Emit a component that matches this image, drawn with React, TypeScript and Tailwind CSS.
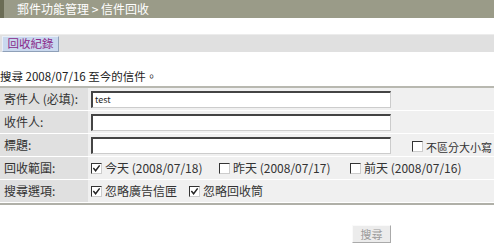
import React from 'react';

const font = { fontFamily: '"Noto Sans CJK TC", "DejaVu Sans", sans-serif' };

const Box: React.FC<{ checked?: boolean }> = ({ checked }) => (
  <span className="inline-flex items-center justify-center w-[11px] h-[11px] bg-white border-t-[1.5px] border-l-[1.5px] border-b border-r border-t-[#333] border-l-[#333] border-b-[#ccc] border-r-[#ccc] mr-[3px] shrink-0">
    {checked && (
      <svg viewBox="0 0 10 10" className="w-[9px] h-[9px]">
        <path d="M1.5 4.5 L4 7.5 L8.5 1.5" fill="none" stroke="#222" strokeWidth="1.6" />
      </svg>
    )}
  </span>
);

const Input: React.FC<{ value?: string }> = ({ value }) => (
  <div className="w-[300px] h-[17px] bg-white border-t-2 border-l-2 border-b border-r border-t-[#444] border-l-[#444] border-b-[#ccc] border-r-[#ccc] text-[9px] leading-[14px] pl-[2px] text-[#222]">
    {value}
  </div>
);

const Row: React.FC<{ label: string; children: React.ReactNode; className?: string }> = ({ label, children, className }) => (
  <div className="flex h-[23px] border-b border-white">
    <div className="w-[88px] bg-[#e0e0e0] pl-[4px] flex items-center text-[12px] text-[#333]">{label}</div>
    <div className={`flex-1 bg-[#f0f0f0] flex pl-[3px] text-[12px] text-[#333] ${className ?? 'items-center'}`}>{children}</div>
  </div>
);

export default function App() {
  return (
    <div className="w-[496px] h-[250px] bg-white overflow-hidden" style={font}>
      {/* header */}
      <div className="flex h-[18px] w-[494px] bg-[#9a9b88]">
        <div className="w-[4px] bg-[#6b6c55]" />
        <div className="pl-[13px] text-[12px] leading-[18px] text-white">郵件功能管理 &gt; 信件回收</div>
      </div>

      {/* tab bar */}
      <div className="mt-[16px] h-[18px] w-[494px] bg-[#e0e0e0] border-t border-[#ececec] flex items-center">
        <div className="ml-[2px] h-[16px] w-[57px] bg-[#c9d8ee] border border-t-[#e8eef8] border-l-[#e8eef8] border-b-[#8fa0b8] border-r-[#8fa0b8] flex items-center justify-center text-[11.5px] text-[#8a2a8a]">
          回收紀錄
        </div>
      </div>

      <div className="mt-[16px] h-[16px] text-[11.5px] leading-[16px] text-[#222]">搜尋 2008/07/16 至今的信件。</div>

      {/* form */}
      <div className="mt-[2px] w-[494px] border-t-2 border-[#b8b8b0] border-b-2 border-b-[#b0b0a8]">
        <Row label="寄件人 (必填):">
          <Input value="test" />
        </Row>
        <Row label="收件人:">
          <Input />
        </Row>
        <Row label="標題:">
          <Input />
          <div className="ml-[21px] flex items-center self-end mb-[1px] text-[11px]">
            <Box />
            不區分大小寫
          </div>
        </Row>
        <Row label="回收範圍:">
          <div className="flex items-center w-[128px]">
            <Box checked />
            今天 (2008/07/18)
          </div>
          <div className="flex items-center w-[131px]">
            <Box />
            昨天 (2008/07/17)
          </div>
          <div className="flex items-center">
            <Box />
            前天 (2008/07/16)
          </div>
        </Row>
        <Row label="搜尋選項:">
          <div className="flex items-center w-[98px]">
            <Box checked />
            忽略廣告信匣
          </div>
          <div className="flex items-center">
            <Box checked />
            忽略回收筒
          </div>
        </Row>
      </div>

      <div className="flex pl-[352px] mt-[20px]">
        <div className="w-[39px] h-[18px] bg-[#ececec] border border-t-[#fafafa] border-l-[#fafafa] border-b-[#aaa] border-r-[#aaa] flex items-center justify-center text-[11px] text-[#9a9a9a]">
          搜尋
        </div>
      </div>
    </div>
  );
}
